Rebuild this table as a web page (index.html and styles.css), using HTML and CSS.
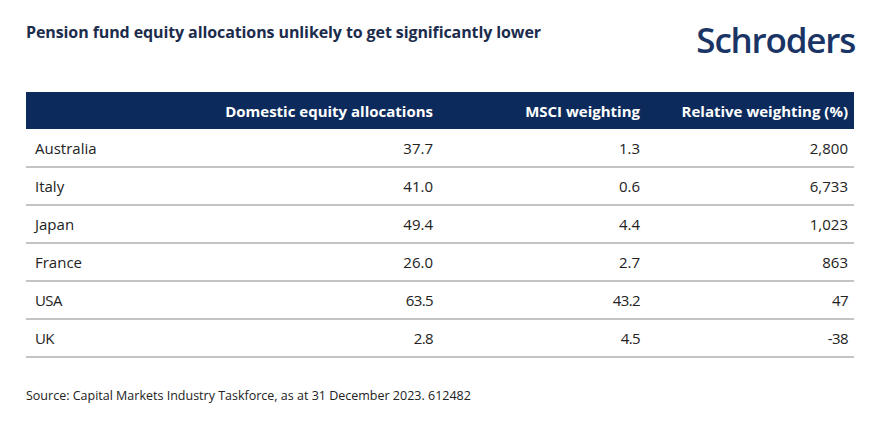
FILE: index.html
```html
<!DOCTYPE html>
<html lang="en">
<head>
<meta charset="utf-8">
<title>Pension fund equity allocations</title>
<link rel="stylesheet" href="styles.css">
</head>
<body>
<div class="page">
  <div class="top">
    <h1 class="title">Pension fund equity allocations unlikely to get significantly lower</h1>
    <div class="logo">Schroders</div>
  </div>
  <table class="data">
    <colgroup>
      <col class="c1">
      <col class="c2">
      <col class="c3">
      <col class="c4">
    </colgroup>
    <thead>
      <tr>
        <th></th>
        <th class="num">Domestic equity allocations</th>
        <th class="num">MSCI weighting</th>
        <th class="num">Relative weighting (%)</th>
      </tr>
    </thead>
    <tbody>
      <tr><td>Australia</td><td class="num">37.7</td><td class="num">1.3</td><td class="num">2,800</td></tr>
      <tr><td>Italy</td><td class="num">41.0</td><td class="num">0.6</td><td class="num">6,733</td></tr>
      <tr><td>Japan</td><td class="num">49.4</td><td class="num">4.4</td><td class="num">1,023</td></tr>
      <tr><td>France</td><td class="num">26.0</td><td class="num">2.7</td><td class="num">863</td></tr>
      <tr class="narrow"><td>USA</td><td class="num">63.5</td><td class="num">43.2</td><td class="num">47</td></tr>
      <tr class="narrow"><td>UK</td><td class="num">2.8</td><td class="num">4.5</td><td class="num">-38</td></tr>
    </tbody>
  </table>
  <p class="source">Source: Capital Markets Industry Taskforce, as at 31 December 2023. 612482</p>
</div>
</body>
</html>
```

FILE: styles.css
```css
html, body {
  margin: 0;
  padding: 0;
  background: #ffffff;
}

.page {
  width: 828px;
  padding: 0 0 0 26px;
  font-family: "Open Sans", "Noto Sans", sans-serif;
  color: #1f1f1f;
}

.top {
  display: flex;
  justify-content: space-between;
  align-items: flex-start;
  height: 92px;
}

.title {
  margin: 22px 0 0 0;
  font-size: 16px;
  line-height: 21px;
  font-weight: 700;
  color: #1c2c4c;
  letter-spacing: -0.1px;
}

.logo {
  margin: 20px -1px 0 0;
  font-size: 35px;
  line-height: 40px;
  font-weight: 600;
  color: #1a3565;
  letter-spacing: -1.2px;
}

.data {
  width: 828px;
  border-collapse: collapse;
  table-layout: fixed;
  font-size: 15px;
}

.c1 { width: 190px; }
.c2 { width: 223px; }
.c3 { width: 207px; }
.c4 { width: 208px; }

.data th,
.data td {
  box-sizing: border-box;
  padding: 0 6px 0 9px;
  white-space: nowrap;
}

.data th {
  background: #0c2b5c;
  color: #ffffff;
  font-weight: 700;
  height: 37px;
  padding-left: 0;
}

.data td {
  height: 38px;
  border-bottom: 2px solid #c4c4c4;
  color: #222222;
}

.num { text-align: right; }

.narrow td {
  letter-spacing: -0.6px;
}

.source {
  margin: 29px 0 0 0;
  font-size: 12.5px;
  line-height: 18px;
  color: #222222;
}
```
